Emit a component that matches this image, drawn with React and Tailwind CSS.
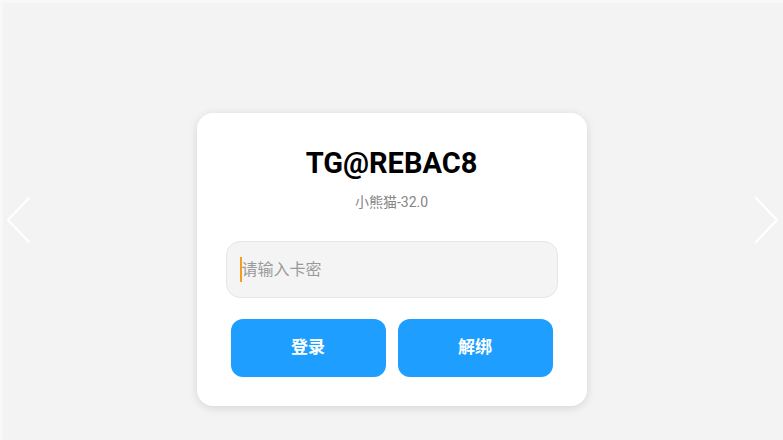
import React from 'react';

const FONT = { fontFamily: 'Roboto, "Noto Sans CJK SC", sans-serif' };

const Chevron = ({ dir }) => (
  <svg width="26" height="48" viewBox="0 0 26 48" fill="none">
    <polyline
      points={dir === 'left' ? '23,2 2,24 23,46' : '3,2 24,24 3,46'}
      stroke="#ffffff"
      strokeWidth="2.2"
      strokeLinecap="round"
      strokeLinejoin="round"
    />
  </svg>
);

export default function App() {
  return (
    <div
      className="relative min-h-[440px] bg-[#f3f3f3] border-t-[3px] border-l-[3px] border-[#f8f8f8]"
      style={FONT}
    >
      {/* carousel arrows */}
      <div className="absolute left-[3px] top-[193px]">
        <Chevron dir="left" />
      </div>
      <div className="absolute right-[4px] top-[193px]">
        <Chevron dir="right" />
      </div>

      <div className="flex justify-center pt-[110px] pr-[3px]">
        <div className="w-[390px] rounded-[16px] bg-white px-[29px] pt-[33px] pb-[29px] shadow-[0_2px_10px_rgba(0,0,0,0.12)]">
          <h1 className="h-[34px] text-center text-[29px] font-bold leading-[34px] text-black">TG@REBAC8</h1>
          <p className="mt-[12px] h-[20px] text-center text-[14px] leading-[20px] text-[#858585]">小熊猫-32.0</p>

          <div className="relative mt-[29px]">
            <input
              type="text"
              placeholder="请输入卡密"
              className="h-[57px] w-full rounded-[14px] border border-[#e6e6e6] bg-[#f4f4f4] pl-[15px] text-[16px] text-[#333] outline-none placeholder:text-[#9a9a9a]"
            />
            <span className="absolute left-[14px] top-[16px] h-[25px] w-[2px] bg-[#f0a020]" />
          </div>

          <div className="mt-[21px] flex gap-[12px] px-[5px]">
            <button className="h-[58px] flex-1 rounded-[12px] bg-[#1e9fff] text-[17px] font-bold text-white">登录</button>
            <button className="h-[58px] flex-1 rounded-[12px] bg-[#1e9fff] text-[17px] font-bold text-white">解绑</button>
          </div>
        </div>
      </div>
    </div>
  );
}
